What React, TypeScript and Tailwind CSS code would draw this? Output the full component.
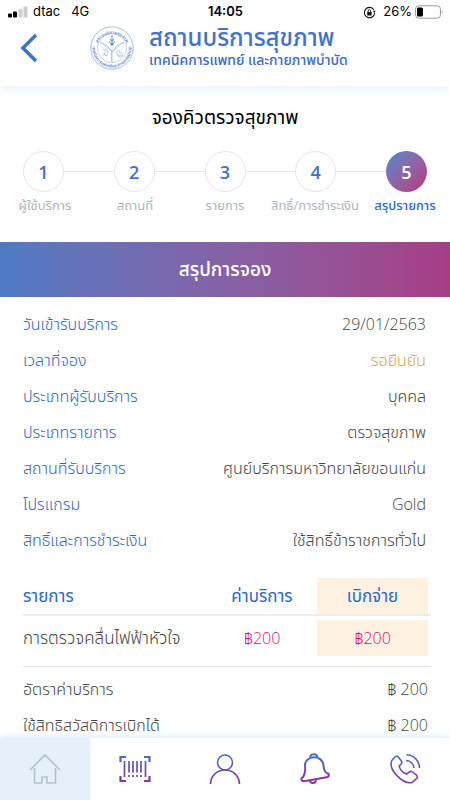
import React from "react";

const steps = ["ผู้ใช้บริการ", "สถานที่", "รายการ", "สิทธิ์/การชำระเงิน", "สรุปรายการ"];

const details = [
  { label: "วันเข้ารับบริการ", value: "29/01/2563" },
  { label: "เวลาที่จอง", value: "รอยืนยัน", pending: true },
  { label: "ประเภทผู้รับบริการ", value: "บุคคล" },
  { label: "ประเภทรายการ", value: "ตรวจสุขภาพ" },
  { label: "สถานที่รับบริการ", value: "ศูนย์บริการมหาวิทยาลัยขอนแก่น" },
  { label: "โปรแกรม", value: "Gold" },
  { label: "สิทธิ์และการชำระเงิน", value: "ใช้สิทธิ์ข้าราชการทั่วไป" },
];

const totals = [
  { label: "อัตราค่าบริการ", value: "฿ 200" },
  { label: "ใช้สิทธิสวัสดิการเบิกได้", value: "฿ 200" },
];

function StatusBar() {
  return (
    <div className="grid h-6 grid-cols-3 items-center pl-2 pr-[7px] font-['Inter',sans-serif] text-[13px] text-black">
      <div className="flex items-center gap-[5px]">
        <svg width="20" height="12" viewBox="0 0 20 12" aria-hidden="true">
          <rect x="0" y="7.5" width="4" height="4" rx="1" />
          <rect x="5" y="5.5" width="4" height="6" rx="1" />
          <rect x="10.500" y="3" width="4" height="8.500" rx="1" fill="#ccc" />
          <rect x="15.500" y="0.500" width="4" height="11" rx="1" fill="#ccc" />
        </svg>
        <span>dtac</span>
        <span className="ml-[6px]">4G</span>
      </div>
      <span className="text-center font-semibold">14:05</span>
      <div className="flex items-center justify-end gap-[2px]">
        <svg className="mr-[5px]" width="13" height="13" viewBox="0 0 13 13" fill="none" stroke="#111" aria-hidden="true">
          <path d="M10.800 3.600A5.200 5.200 0 1 0 11.700 7" strokeWidth="1.100" />
          <path d="M9.700 4.800h3L11.500 7z" fill="#111" stroke="none" />
          <rect x="4.200" y="5.900" width="4.400" height="3.500" rx=".5" fill="#111" stroke="none" />
          <path d="M5.100 6V5a1.300 1.300 0 0 1 2.600 0v1" strokeWidth=".9" />
        </svg>
        <span>26%</span>
        <svg width="29" height="14" viewBox="0 0 29 14" aria-hidden="true">
          <rect x="1.500" y=".8" width="25" height="12.400" rx="3.500" fill="none" stroke="#9a9a9a" />
          <rect x="3" y="2.500" width="6" height="9" rx="1.500" />
          <path d="M27.800 5v4c1-.5 1-3.500 0-4z" fill="#9a9a9a" />
        </svg>
      </div>
    </div>
  );
}

function Seal() {
  return (
    <svg width="44" height="44" viewBox="0 0 44 44" fill="none" stroke="#8fabdc" aria-hidden="true">
      <defs>
        <path id="seal-top" d="M7.500 18A15.500 15.500 0 0 1 36.500 18" />
        <path id="seal-bottom" d="M2.800 18A19.600 19.600 0 1 0 41.200 18" />
      </defs>
      <circle cx="22" cy="22" r="21.200" strokeWidth=".8" />
      <circle cx="22" cy="22" r="14.700" strokeWidth=".5" />
      <g fill="#5f85cc" stroke="none" fontSize="4.500" fontWeight="600" textAnchor="middle">
        <text><textPath href="#seal-top" startOffset="50%">สถานบริการสุขภาพ</textPath></text>
        <text><textPath href="#seal-bottom" startOffset="50%">เทคนิคการแพทย์และกายภาพบำบัด</textPath></text>
      </g>
      <path d="M22 36V25.500M22 25.500L10 16M22 25.500L34 16M22 36c-1-4-1-7 0-10.500M10 16c5 2 9 5 12 9.500M34 16c-5 2-9 5-12 9.500" strokeWidth=".6" />
      <path d="M22 9v4M20.500 13c0 3 3 3 3 0M19.500 15.500c0 3 5 3 5 0M22 13v7M20.500 18.500h3" stroke="#4472c4" strokeWidth=".8" />
      <path d="M13 23l3 2-2 3 3 2M12 29h6M15 22.500l3 2.500-1 3M27 24v5h6M29 23.500v3h3M28 29a2 2 0 1 0 4 0" strokeWidth=".6" />
    </svg>
  );
}

function Header() {
  return (
    <header className="z-10 shrink-0 bg-white pb-[14px] shadow-[0_4px_10px_#e9f3fd]">
      <StatusBar />
      <div className="flex h-12 items-center">
        <button type="button" aria-label="ย้อนกลับ" className="ml-5 flex w-[18px] justify-center">
          <svg width="18" height="30" viewBox="0 0 18 30" fill="none" stroke="#4472c4" strokeWidth="3.600">
            <path d="M16 2L3 15l13 13" />
          </svg>
        </button>
        <div className="ml-[52px] mr-[15px]"><Seal /></div>
        <div className="text-[#4472c4]">
          <h1 className="text-2xl font-medium leading-6">สถานบริการสุขภาพ</h1>
          <p className="text-sm font-medium leading-[22px] text-[#3a6bc2]">เทคนิคการแพทย์ และกายภาพบำบัด</p>
        </div>
      </div>
    </header>
  );
}

function Stepper() {
  return (
    <div>
      <div className="flex items-center px-[23px]">
        {steps.map((step, i) => (
          <React.Fragment key={step}>
            {i > 0 && <span className="h-px flex-1 bg-[#e6e6e6]" />}
            <span
              className={
                i === 4
                  ? "flex size-[41px] items-center justify-center rounded-full bg-linear-to-br from-[#4285d0] to-[#b82c7c] text-lg font-semibold text-white"
                  : "flex size-[41px] items-center justify-center rounded-full border border-[#e6e6e6] text-lg font-semibold text-[#4472c4]"
              }
            >
              {i + 1}
            </span>
          </React.Fragment>
        ))}
      </div>
      <div className="mt-[3px] grid grid-cols-5 text-[13px] leading-5">
        {steps.map((step, i) => (
          <span key={step} className={i === 4 ? "whitespace-nowrap text-center font-medium text-[#2f66c0]" : "whitespace-nowrap text-center text-[#b0b5bd]"}>
            {step}
          </span>
        ))}
      </div>
    </div>
  );
}

const navItems = [
  {
    label: "หน้าแรก",
    active: true,
    icon: <path d="M1 17L16 2l15 15M5.500 15v15H13v-6h5v6h8.500V15" />,
  },
  {
    label: "บาร์โค้ด",
    icon: (
      <>
        <path d="M1.500 9V4H7M25 4h5.500v5M1.500 23v5H7M25 28h5.500v-5" strokeWidth="2.200" />
        <path d="M5.500 8v16M10 8v11.500M14 8v11.500M18 8v11.500M22 8v11.500M26.500 8v16M10 22v2M14 22v2M18 22v2M22 22v2" strokeWidth="1.700" />
      </>
    ),
  },
  {
    label: "บัญชี",
    icon: (
      <>
        <circle cx="16" cy="9.500" r="7.500" />
        <path d="M1.500 31c.3-8.500 6.500-14 14.500-14s14.200 5.500 14.500 14" />
      </>
    ),
  },
  {
    label: "แจ้งเตือน",
    icon: (
      <>
        <path d="M6 13C5.500 7.500 10 4.500 15 4.300c5-.2 9 3 9.500 8.200.4 4.500 1 6.500 3.500 7.700 2.500.2 2.500 3.500-.3 4L5 28.300c-3 .3-3.500-3.800-.8-4.300C6 21 6.500 17 6 13z" strokeWidth="2" />
        <path d="M11.500 5V3c.5-2.300 6-2.300 6.500 0v2M11 28c.8 3 5.500 2.600 6.200-.8" strokeWidth="2" />
      </>
    ),
  },
  {
    label: "โทร",
    icon: (
      <>
        <path d="M6 4L2.800 7.500C-1 16.500 13.500 31.500 23 29.500l4.500-3.800c1.300-1 1-2.500 0-3.500l-4-3.200c-1.300-1-2.500-.8-3.500.2l-2.200 1.900c-3.500-1-6.500-4.200-7.700-7.800l1.900-2.200c1-1 1-2.200.2-3.300L9.300 4C8.300 2.800 7 3 6 4z" />
        <path d="M17.500 1.800C25 2 30.500 8 30.500 15M17 7.500c4.500.3 7.500 3.500 8 7.500" />
      </>
    ),
  },
];

function BottomNav() {
  return (
    <nav className="z-10 grid h-[62px] shrink-0 grid-cols-5 bg-white shadow-[0_-2px_6px_#dceefa]">
      {navItems.map(({ label, active, icon }, i) => (
        <button key={label} type="button" aria-label={label} className={active ? "flex items-center justify-center bg-[#e6f0fb]" : "flex items-center justify-center"}>
          <svg width="32" height="32" viewBox="0 0 32 32" fill="none" stroke={active ? "#b4c0ca" : `url(#nav-${i})`} strokeWidth="1.600">
            <defs>
              <linearGradient id={`nav-${i}`} gradientUnits="userSpaceOnUse" x1="16" y1="1" x2="16" y2="31">
                <stop offset="0" stopColor="#4272c6" />
                <stop offset="1" stopColor="#923093" />
              </linearGradient>
            </defs>
            {icon}
          </svg>
        </button>
      ))}
    </nav>
  );
}

export default function App() {
  return (
    <div className="flex h-screen flex-col bg-white font-['Open_Sans','Noto_Sans_Thai',sans-serif]">
      <Header />
      <main className="min-h-0 flex-1 overflow-y-auto [scrollbar-width:none]">
        <h2 className="pb-[21px] pt-[18px] text-center text-[19px] leading-[26px] text-black">จองคิวตรวจสุขภาพ</h2>
        <Stepper />
        <h3 className="mt-[27px] bg-linear-to-r from-[#4d7bc6] to-[#a63d86] text-center text-[19px] font-medium leading-[55px] text-white">สรุปการจอง</h3>

        <dl className="pl-[23px] pr-6 pt-[9px] text-base font-light">
          {details.map(({ label, value, pending }) => (
            <div key={label} className="flex h-9 items-center justify-between">
              <dt className="text-[#2f66c0]">{label}</dt>
              <dd className={pending ? "text-[#dca060]" : "text-[#444]"}>{value}</dd>
            </div>
          ))}
        </dl>

        <div className="pb-6 pl-[23px] pr-[19px] pt-5">
          <table className="w-full border-collapse text-base">
            <thead>
              <tr className="border-b-2 border-[#ececec] text-[17px] text-[#2f66c0]">
                <th className="p-0 text-left font-normal">รายการ</th>
                <th className="w-[110px] p-0 font-normal">ค่าบริการ</th>
                <th className="w-[114px] p-0 pr-[3px] font-normal"><div className="bg-[#fdf2e2] leading-9">เบิกจ่าย</div></th>
              </tr>
            </thead>
            <tbody>
              <tr className="border-b border-[#e2e2e2] text-center font-light text-[#c9186e]">
                <td className="p-0 pb-[10px] pt-1 text-left text-[17px] text-[#444]">การตรวจคลื่นไฟฟ้าหัวใจ</td>
                <td className="p-0 pb-[10px] pt-1">฿200</td>
                <td className="p-0 pb-[10px] pr-[3px] pt-1"><div className="bg-[#fdf2e2] leading-9">฿200</div></td>
              </tr>
            </tbody>
          </table>
          <dl className="pr-[3px] pt-1 text-base font-light text-[#444]">
            {totals.map(({ label, value }) => (
              <div key={label} className="flex h-9 items-center justify-between">
                <dt>{label}</dt>
                <dd>{value}</dd>
              </div>
            ))}
          </dl>
        </div>
      </main>
      <BottomNav />
    </div>
  );
}
